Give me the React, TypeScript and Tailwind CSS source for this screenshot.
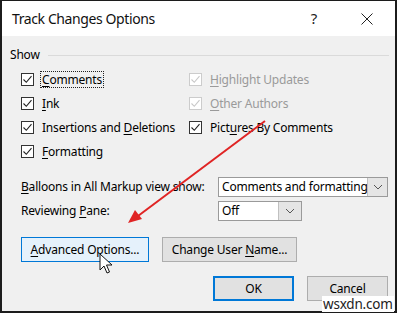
import React from "react";

const F = { fontFamily: '"Noto Sans", "Open Sans", sans-serif' };

function Check({ disabled }: { disabled?: boolean }) {
  return (
    <span
      className={`w-[13px] h-[13px] border flex items-center justify-center bg-white shrink-0 ${
        disabled ? "border-[#cccccc]" : "border-[#333333]"
      }`}
    >
      <svg width="11" height="11" viewBox="0 0 11 11">
        <path d="M1.5 5.5 L4.3 8.3 L9.5 2.2" fill="none" stroke={disabled ? "#c8c8c8" : "#222"} strokeWidth="1.1" />
      </svg>
    </span>
  );
}

function U({ children }: { children: React.ReactNode }) {
  return <span className="underline underline-offset-2 decoration-1">{children}</span>;
}

function Row({ children, disabled, focus }: { children: React.ReactNode; disabled?: boolean; focus?: boolean }) {
  return (
    <div className="h-[24px] flex items-center">
      <Check disabled={disabled} />
      <span
        className={`ml-[7px] px-[1px] leading-[15px] whitespace-nowrap ${disabled ? "text-[#9a9a9a]" : "text-black"} ${
          focus ? "outline outline-1 outline-dotted outline-[#222]" : ""
        }`}
      >
        {children}
      </span>
    </div>
  );
}

function Chevron() {
  return (
    <svg width="10" height="6" viewBox="0 0 10 6">
      <path d="M1 1 L5 5 L9 1" fill="none" stroke="#555" strokeWidth="1" />
    </svg>
  );
}

export default function App() {
  return (
    <div className="w-[400px] h-[315px] bg-white relative overflow-hidden text-[12px] tracking-[-0.2px]" style={F}>
      <div className="w-[397px] h-[313px] border-l-2 border-t border-r-2 border-b-2 border-[#1c1c1c] bg-[#f0f0f0] flex flex-col">
        <div className="h-[35px] bg-white flex items-center shrink-0">
          <span className="ml-[10px] text-[14px] tracking-[-0.4px] text-[#111]">Track Changes Options</span>
          <span className="ml-auto mr-[44px] text-[15px] text-[#222]">?</span>
          <svg className="mr-[22px]" width="12" height="12" viewBox="0 0 12 12">
            <path d="M0.5 0.5 L11.5 11.5 M11.5 0.5 L0.5 11.5" stroke="#222" strokeWidth="1" />
          </svg>
        </div>

        <div className="flex flex-col pl-[8px] pr-[6px]">
          <div className="mt-[11px] h-[16px] flex items-center">
            <span className="text-black">Show</span>
            <div className="ml-[8px] flex-1 h-px bg-[#dadada]" />
          </div>

          <div className="mt-[4px] ml-[11px] flex">
            <div className="w-[168px] flex flex-col">
              <Row focus>
                <U>C</U>omments
              </Row>
              <Row>
                <U>I</U>nk
              </Row>
              <Row>
                Insertions and <U>D</U>eletions
              </Row>
              <Row>
                <U>F</U>ormatting
              </Row>
            </div>
            <div className="flex flex-col">
              <Row disabled>
                <U>H</U>ighlight Updates
              </Row>
              <Row disabled>
                <U>O</U>ther Authors
              </Row>
              <Row>
                Pict<U>u</U>res By Comments
              </Row>
            </div>
          </div>

          <div className="mt-[14px] ml-[11px] h-[20px] flex items-center">
            <span className="w-[197px] whitespace-nowrap">
              <U>B</U>alloons in All Markup view show:
            </span>
            <div className="w-[170px] h-[20px] border border-[#9a9a9a] bg-white flex">
              <span className="flex-1 pl-[3px] leading-[18px] whitespace-nowrap overflow-hidden">Comments and formatting</span>
              <span className="w-[20px] bg-[#e5e5e5] border-l border-[#c0c0c0] flex items-center justify-center">
                <Chevron />
              </span>
            </div>
          </div>

          <div className="mt-[4px] ml-[11px] h-[20px] flex items-center">
            <span className="w-[197px] whitespace-nowrap">
              Reviewing <U>P</U>ane:
            </span>
            <div className="w-[84px] h-[20px] border border-[#9a9a9a] bg-white flex">
              <span className="flex-1 pl-[3px] leading-[18px]">Off</span>
              <span className="w-[23px] bg-[#e5e5e5] border-l border-[#c0c0c0] flex items-center justify-center">
                <Chevron />
              </span>
            </div>
          </div>

          <div className="mt-[16px] ml-[11px] h-[25px] flex items-center gap-[13px]">
            <div className="w-[128px] h-[25px] border border-[#0078d7] bg-[#e5f1fb] flex items-center justify-center">
              <span>
                <U>A</U>dvanced Options...
              </span>
            </div>
            <div className="w-[135px] h-[25px] border border-[#adadad] bg-[#e1e1e1] flex items-center justify-center">
              <span>
                Change User <U>N</U>ame...
              </span>
            </div>
          </div>

          <div className="mt-[14px] h-[25px] flex items-center justify-end gap-[13px] pr-[1px]">
            <div className="w-[81px] h-[25px] border-2 border-[#0078d7] bg-[#e1e1e1] flex items-center justify-center">
              OK
            </div>
            <div className="w-[81px] h-[25px] border border-[#adadad] bg-[#e1e1e1] flex items-center justify-center">
              Cancel
            </div>
          </div>
        </div>
      </div>

      <svg className="absolute left-0 top-0 pointer-events-none" width="400" height="315" viewBox="0 0 400 315">
        <line x1="265" y1="121" x2="138" y2="216" stroke="#e02424" strokeWidth="2" />
        <polygon points="128,223 135,210 142,219" fill="#e02424" />
        <path
          d="M100 254 L100 270 L104 266 L107 273 L109.5 272 L106.5 265 L112 265 Z"
          fill="white"
          stroke="#111"
          strokeWidth="1"
          strokeLinejoin="round"
        />
      </svg>

      <span className="absolute left-[322px] top-[296px] bg-white px-[1px] text-[13.5px] leading-[16px] text-[#222]">
        wsxdn.com
      </span>
    </div>
  );
}
